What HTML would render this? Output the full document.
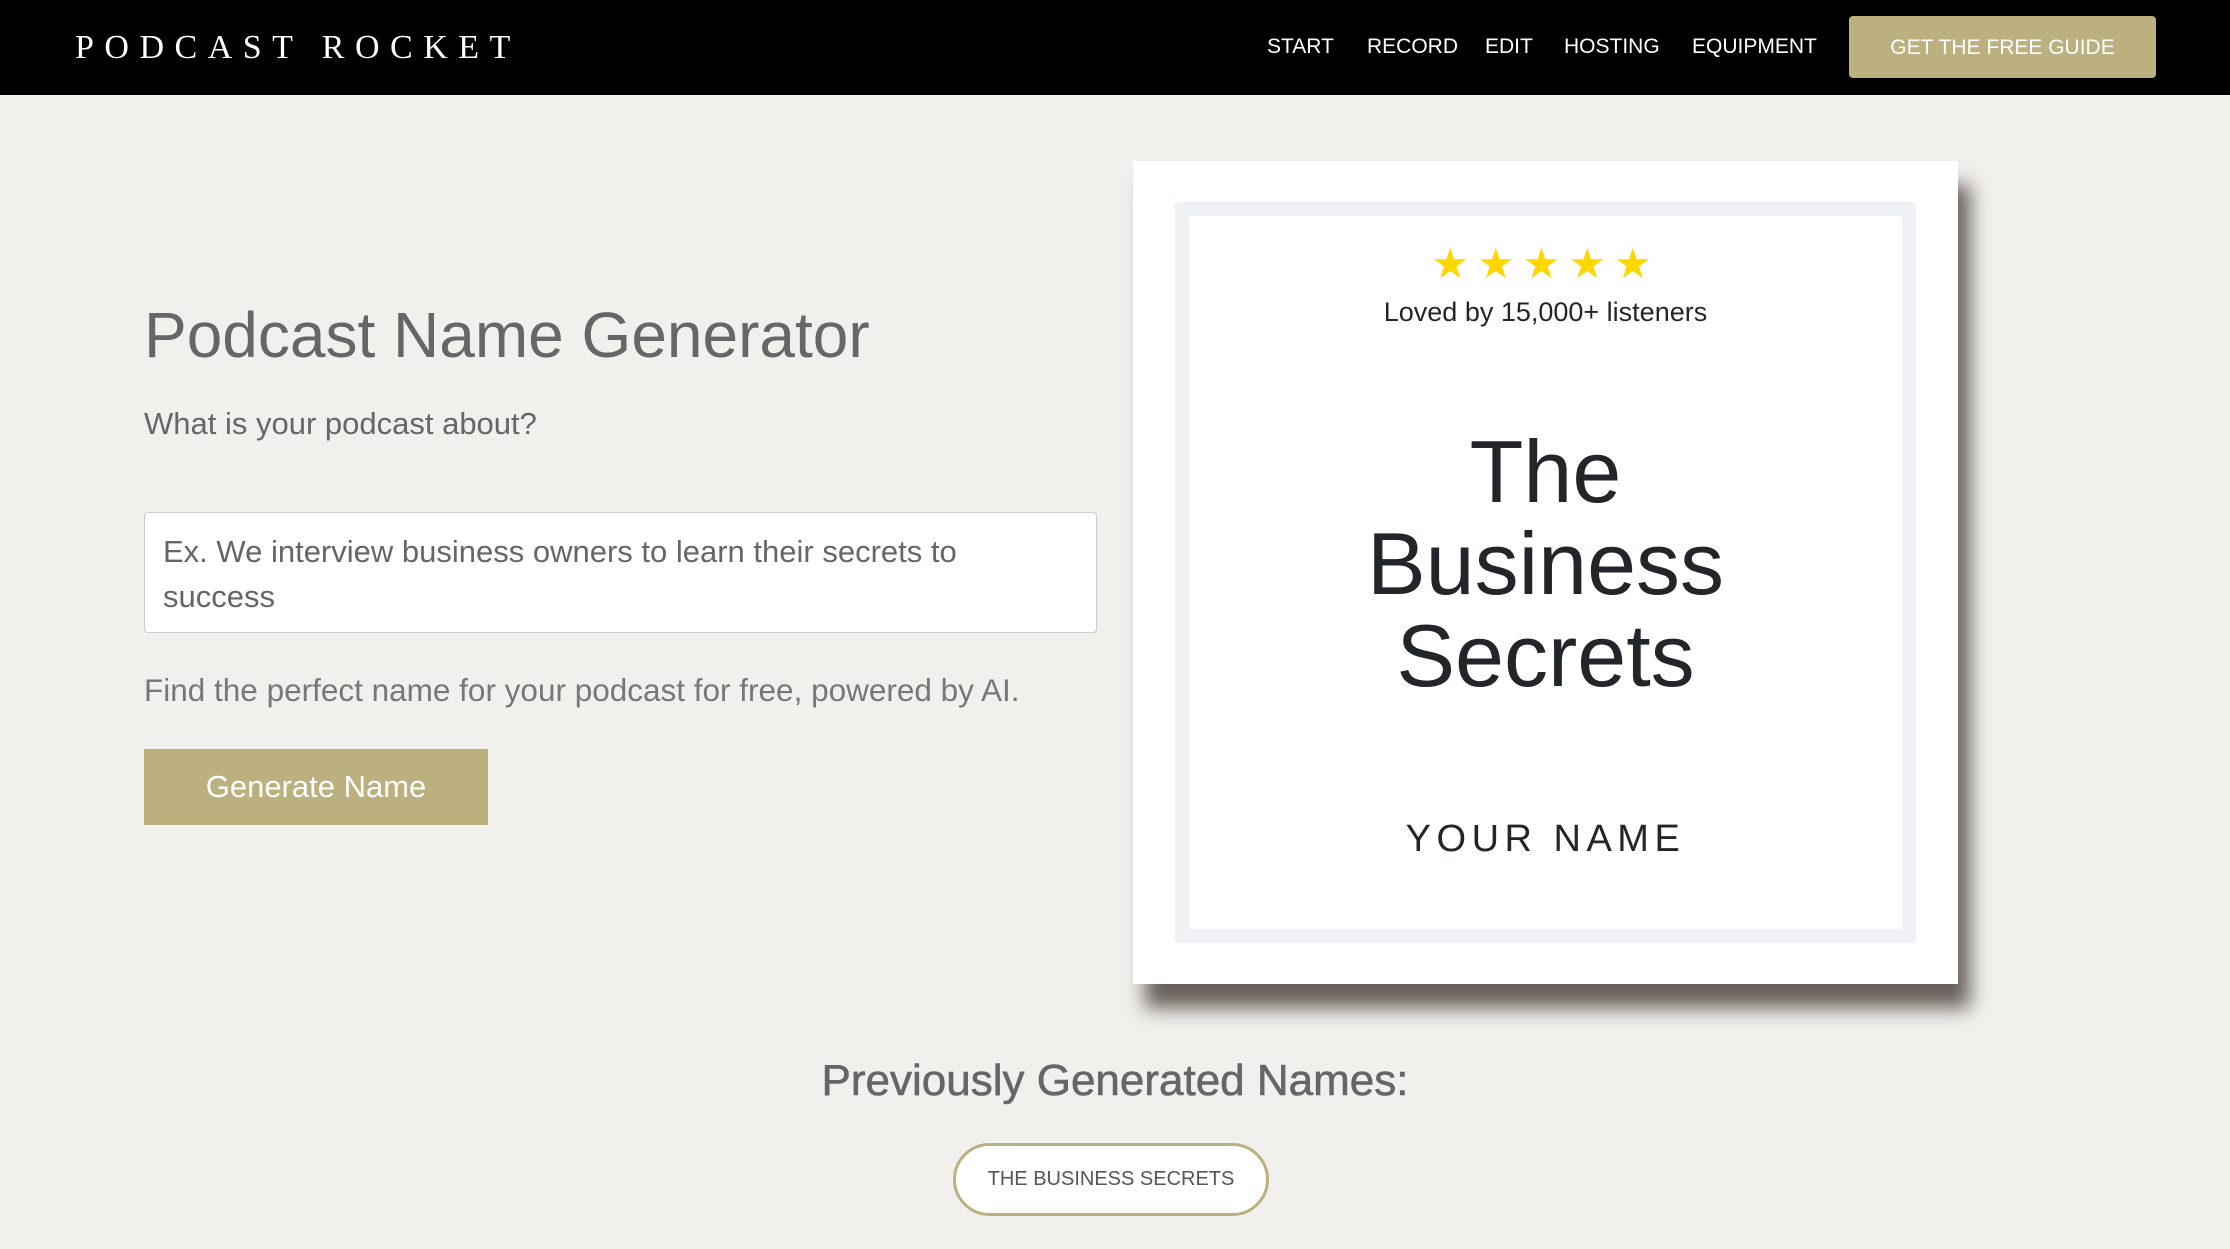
<!DOCTYPE html>
<html><head><meta charset="utf-8"><style>
*{margin:0;padding:0;box-sizing:border-box}
body{width:2230px;height:1249px;background:#f1f0ec;font-family:"Liberation Sans",sans-serif;position:relative;overflow:hidden}
.nav{position:absolute;left:0;top:0;width:2230px;height:95px;background:#000}
.logo{position:absolute;left:75px;top:29px;font-family:"Liberation Serif",serif;font-size:34px;color:#fff;letter-spacing:10.5px;white-space:nowrap}
.nl{position:absolute;top:35px;color:#fff;font-size:21px;white-space:nowrap}
.gbtn{position:absolute;left:1849px;top:16px;width:307px;height:62px;background:#bcb07f;border-radius:4px;color:#fff;font-size:21px;text-align:center;line-height:64px}
.abs{position:absolute;white-space:nowrap}
.card{position:absolute;left:1133px;top:161px;width:825px;height:823px;background:#fff;box-shadow:12px 24px 18px rgba(60,50,45,.75)}
.frame{position:absolute;left:42px;top:41px;width:741px;height:741px;border:14px solid #eef1f5;border-radius:3px}
.c{position:absolute;left:0;width:825px;text-align:center;color:#22262b}
</style></head><body>
<div class="nav">
<div class="logo">PODCAST ROCKET</div>
<div class="nl" style="left:1267px">START</div>
<div class="nl" style="left:1367px">RECORD</div>
<div class="nl" style="left:1485px">EDIT</div>
<div class="nl" style="left:1564px">HOSTING</div>
<div class="nl" style="left:1692px">EQUIPMENT</div>
<div class="gbtn">GET THE FREE GUIDE</div>
</div>
<div class="abs" style="left:144px;top:298px;font-size:64px;color:#666">Podcast Name Generator</div>
<div class="abs" style="left:144px;top:406px;font-size:31px;color:#666">What is your podcast about?</div>
<div class="abs" style="left:144px;top:512px;width:953px;height:121px;background:#fff;border:1px solid #ccc;border-radius:4px;padding:16px 18px;font-size:31px;line-height:45px;color:#666">Ex. We interview business owners to learn their secrets to<br>success</div>
<div class="abs" style="left:144px;top:672px;font-size:31.5px;color:#777">Find the perfect name for your podcast for free, powered by AI.</div>
<div class="abs" style="left:144px;top:749px;width:344px;height:76px;background:#bcb07e;color:#fff;font-size:31px;text-align:center;line-height:76px">Generate Name</div>
<div class="card"><div class="frame"></div>
<div class="c" style="top:78px;font-size:42px;color:#ffd600;letter-spacing:8px">★★★★★</div>
<div class="c" style="top:136px;font-size:27px">Loved by 15,000+ listeners</div>
<div class="c" style="top:265px;font-size:88px;line-height:92px">The<br>Business<br>Secrets</div>
<div class="c" style="top:657px;font-size:38px;letter-spacing:5.5px">YOUR NAME</div>
</div>
<div class="abs" style="left:0;width:2230px;text-align:center;top:1056px;font-size:44px;color:#666;-webkit-text-stroke:0.6px #666">Previously Generated Names:</div>
<div class="abs" style="left:953px;top:1143px;width:316px;height:73px;border:3px solid #bcb07e;border-radius:37px;text-align:center;line-height:67px;font-size:20px;color:#555;background:#fff">THE BUSINESS SECRETS</div>
</body></html>
